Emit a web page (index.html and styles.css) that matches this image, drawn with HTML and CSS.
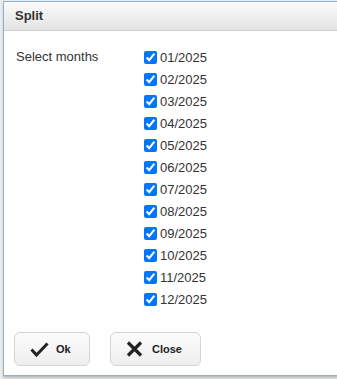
FILE: index.html
```html
<!DOCTYPE html>
<html>
<head>
<meta charset="utf-8">
<link rel="stylesheet" href="styles.css">
</head>
<body>
<div class="dialog">
  <div class="header">Split</div>
  <div class="content">
    <div class="form-row">
      <div class="label">Select months</div>
      <div class="months">
        <label class="month"><input type="checkbox" checked>01/2025</label>
        <label class="month"><input type="checkbox" checked>02/2025</label>
        <label class="month"><input type="checkbox" checked>03/2025</label>
        <label class="month"><input type="checkbox" checked>04/2025</label>
        <label class="month"><input type="checkbox" checked>05/2025</label>
        <label class="month"><input type="checkbox" checked>06/2025</label>
        <label class="month"><input type="checkbox" checked>07/2025</label>
        <label class="month"><input type="checkbox" checked>08/2025</label>
        <label class="month"><input type="checkbox" checked>09/2025</label>
        <label class="month"><input type="checkbox" checked>10/2025</label>
        <label class="month"><input type="checkbox" checked>11/2025</label>
        <label class="month"><input type="checkbox" checked>12/2025</label>
      </div>
    </div>
    <div class="buttons">
      <button class="btn btn-ok">
        <svg width="19" height="15" viewBox="0 0 19 15"><path d="M1.5 7.5 L6.5 13 L17.5 1.5" fill="none" stroke="#222" stroke-width="3" stroke-linejoin="miter"/></svg>
        <span>Ok</span>
      </button>
      <button class="btn btn-close">
        <svg width="17" height="16" viewBox="0 0 17 16"><path d="M2 1.5 L15 14.5 M15 1.5 L2 14.5" fill="none" stroke="#222" stroke-width="3.2"/></svg>
        <span>Close</span>
      </button>
    </div>
  </div>
</div>
</body>
</html>
```
FILE: styles.css
```css
html, body {
  margin: 0;
  padding: 0;
  overflow: hidden;
}
body {
  width: 337px;
  height: 379px;
  background: #ececec;
  font-family: "Liberation Sans", Arial, sans-serif;
  color: #333;
}
.dialog {
  margin: 1px 0 0 3px;
  width: 340px;
  height: 373px;
  border: 1px solid #8fb1d2;
  border-right: none;
  background: #fff;
  box-shadow: 0 2px 2px rgba(0,0,0,0.2);
}
.header {
  height: 28px;
  line-height: 28px;
  padding-left: 11px;
  font-size: 13px;
  font-weight: bold;
  color: #333;
  background: linear-gradient(#fafafa, #e4e4e4);
  border-bottom: 1px solid #cfcfcf;
}
.content {
  padding: 15px 0 0 12px;
}
.form-row {
  display: flex;
}
.label {
  width: 128px;
  font-size: 13px;
  line-height: 22px;
}
.months {
  display: flex;
  flex-direction: column;
}
.month {
  display: flex;
  align-items: center;
  height: 22px;
  font-size: 13px;
}
.month input {
  width: 13px;
  height: 13px;
  margin: 0 3px 0 0;
  accent-color: #0075ff;
}
.buttons {
  display: flex;
  gap: 20px;
  margin-top: 22px;
  margin-left: -2px;
}
.btn {
  height: 34px;
  display: flex;
  align-items: center;
  border: 1px solid #d4d4d4;
  border-radius: 6px;
  background: linear-gradient(#fcfcfc, #eeeeee);
  font-family: "Liberation Sans", Arial, sans-serif;
  font-size: 11px;
  font-weight: bold;
  color: #222;
  padding: 0;
}
.btn-ok {
  width: 76px;
  padding-left: 15px;
  gap: 7px;
}
.btn-close {
  width: 91px;
  padding-left: 15px;
  gap: 9px;
}
```
